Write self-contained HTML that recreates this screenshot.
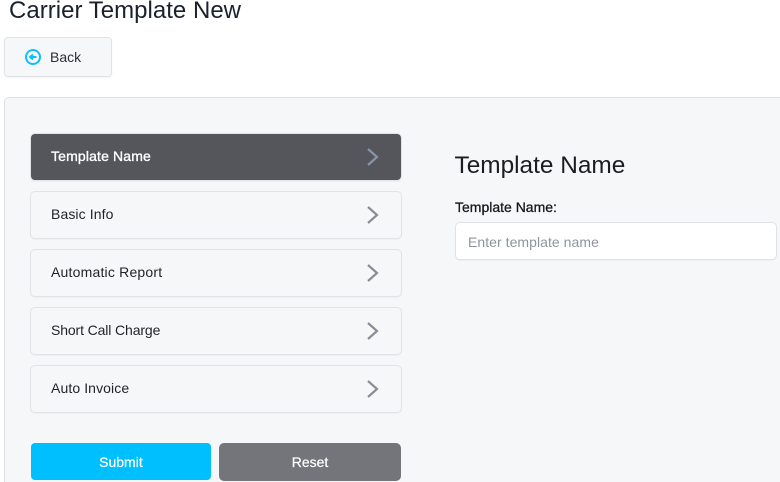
<!DOCTYPE html>
<html><head><meta charset="utf-8"><style>
html,body{margin:0;padding:0;background:#fff;width:780px;height:482px;overflow:hidden}
body{font-family:"Liberation Sans",sans-serif;color:#212529}
#w{position:relative;width:780px;height:482px;overflow:hidden;left:0;top:0}
div{position:absolute;box-sizing:border-box;white-space:nowrap}
.item{left:30px;width:372px;height:48px;background:#f6f7f9;border:1px solid #e1e3e7;border-radius:5px;box-shadow:0 1px 1px rgba(0,0,0,.04)}
.item span{position:absolute;left:20px;top:14px;font-size:14px;line-height:17px;color:#1f2226}
.item svg{position:absolute;left:334px;top:13px}
</style></head><body><div id="w">
<div style="left:9px;top:-4px;font-size:24px;line-height:29px;letter-spacing:.02px;color:#1a202c">Carrier Template New</div>
<div style="left:4px;top:37px;width:108px;height:40px;background:#f6f7f9;border:1px solid #e1e3e7;border-radius:4px;box-shadow:0 1px 2px rgba(0,0,0,.05)">
<svg style="position:absolute;left:19px;top:10px" width="18" height="18" viewBox="0 0 18 18"><circle cx="9" cy="9" r="7" fill="none" stroke="#10bfff" stroke-width="2"/><path d="M12.500 9H6.500M9 6.500L6 9l3 2.500" fill="none" stroke="#10bfff" stroke-width="2"/></svg>
<span style="position:absolute;left:45px;top:11px;font-size:14px;line-height:17px;color:#2a2f3a">Back</span></div>
<div style="left:4px;top:97px;width:790px;height:395px;background:#f6f7f9;border:1px solid #dfe1e5;border-radius:5px"></div>
<div class="item" style="top:133px;background:#54565b"><span style="color:#fff;letter-spacing:.15px;-webkit-text-stroke:.35px #fff">Template Name</span><svg width="16" height="20" viewBox="0 0 16 20"><path d="M3 2L12 10L3 18" fill="none" stroke="#8a94a6" stroke-width="2.200"/></svg></div>
<div class="item" style="top:191px"><span style="letter-spacing:.1px">Basic Info</span><svg width="16" height="20" viewBox="0 0 16 20"><path d="M3 2L12 10L3 18" fill="none" stroke="#8a8d96" stroke-width="2.200"/></svg></div>
<div class="item" style="top:249px"><span style="letter-spacing:.2px">Automatic Report</span><svg width="16" height="20" viewBox="0 0 16 20"><path d="M3 2L12 10L3 18" fill="none" stroke="#8a8d96" stroke-width="2.200"/></svg></div>
<div class="item" style="top:307px"><span style="letter-spacing:-.12px">Short Call Charge</span><svg width="16" height="20" viewBox="0 0 16 20"><path d="M3 2L12 10L3 18" fill="none" stroke="#8a8d96" stroke-width="2.200"/></svg></div>
<div class="item" style="top:365px"><span style="letter-spacing:.1px">Auto Invoice</span><svg width="16" height="20" viewBox="0 0 16 20"><path d="M3 2L12 10L3 18" fill="none" stroke="#8a8d96" stroke-width="2.200"/></svg></div>
<div style="left:30.700px;top:443.400px;width:180.500px;height:36.800px;background:#00bfff;border-radius:4px;color:#fff;font-size:14px;line-height:38px;text-align:center;-webkit-text-stroke:.2px #fff">Submit</div>
<div style="left:219px;top:443px;width:182px;height:38px;background:#73757a;border-radius:5px;color:#fff;font-size:14px;line-height:38px;text-align:center;-webkit-text-stroke:.2px #fff">Reset</div>
<div style="left:454.500px;top:151px;font-size:24.400px;line-height:30px;color:#1a1e22">Template Name</div>
<div style="left:455px;top:199px;font-size:14px;line-height:17px;color:#16191c;-webkit-text-stroke:.3px #16191c">Template Name:</div>
<div style="left:455px;top:222px;width:322px;height:38px;background:#fff;border:1px solid #e0e2e6;border-radius:5px;box-shadow:0 1px 1px rgba(0,0,0,.04)"><span style="position:absolute;left:12px;top:11px;font-size:14px;line-height:17px;letter-spacing:.05px;color:#8f949c">Enter template name</span></div>
</div></body></html>
